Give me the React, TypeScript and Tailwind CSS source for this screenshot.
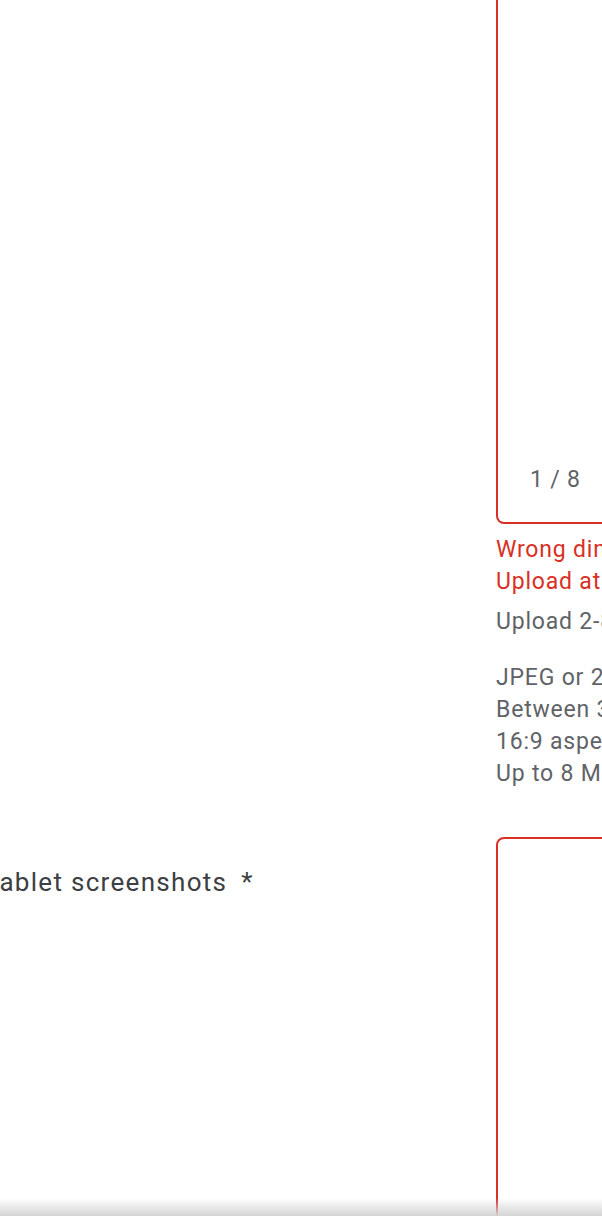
export default function App() {
  return (
    <div
      className="relative h-[1216px] w-[602px] overflow-hidden bg-white"
      style={{ fontFamily: "Roboto, 'Noto Sans', sans-serif" }}
    >
      <div className="-ml-[16px] -mt-[4px] flex flex-col">
        {/* phone screenshots */}
        <div className="flex">
          <div className="w-[512px] shrink-0" />
          <div className="w-[700px] shrink-0 text-[23px] leading-[32px] tracking-[0.8px]">
            <div className="flex h-[528px] flex-col justify-end rounded-b-[8px] border-2 border-t-0 border-[#d93025] pb-[26px] pl-[32px]">
              <span className="text-[#5f6368]">1 / 8</span>
            </div>
            <div className="mt-[10px] text-[#d93025]">
              <p>Wrong dimensions. Screenshots must be 16:9 or 9:16</p>
              <p>Upload at least 2 phone screenshots</p>
            </div>
            <p className="mt-[8px] text-[#5f6368]">
              Upload 2-8 phone screenshots. Screenshots must be:
            </p>
            <div className="mt-[24px] text-[#5f6368]">
              <p>JPEG or 24-bit PNG (no alpha)</p>
              <p>Between 320 px and 3,840 px</p>
              <p>16:9 aspect ratio for landscape, 9:16 for portrait</p>
              <p>Up to 8 MB each</p>
            </div>
          </div>
        </div>

        {/* tablet screenshots */}
        <div className="mt-[47px] flex">
          <div className="w-[512px] shrink-0 pt-[25px]">
            <p className="text-[26px] leading-[40px] tracking-[1.3px] text-[#3c4043]">
              Tablet screenshots<span className="ml-[14px]">*</span>
            </p>
          </div>
          <div className="w-[700px] shrink-0">
            <div className="h-[420px] rounded-[8px] border-2 border-[#d93025]" />
          </div>
        </div>
      </div>

      <div className="pointer-events-none absolute bottom-0 left-0 h-[18px] w-full bg-gradient-to-b from-transparent to-[#d4d4d4]" />
    </div>
  );
}
